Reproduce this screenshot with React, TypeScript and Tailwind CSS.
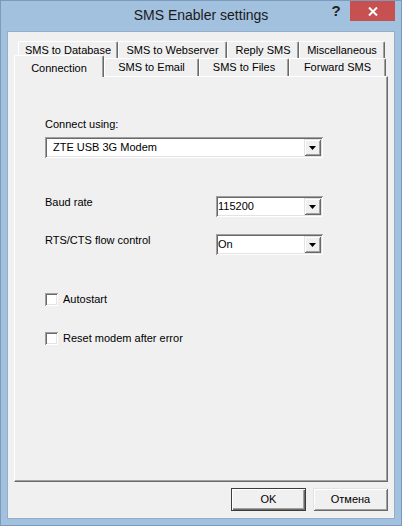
import React from 'react';

const sunken =
  'shadow-[inset_1px_1px_0_#a0a0a0,inset_-1px_-1px_0_#ffffff,inset_2px_2px_0_#696969,inset_-2px_-2px_0_#e3e3e3]';
const raised =
  'shadow-[inset_1px_1px_0_#e3e3e3,inset_-1px_-1px_0_#696969,inset_2px_2px_0_#ffffff,inset_-2px_-2px_0_#a0a0a0]';

function Arrow() {
  return (
    <svg width="7" height="4" viewBox="0 0 7 4">
      <path d="M0 0h7L3.5 4z" fill="#000" />
    </svg>
  );
}

function Combo({ value, width, indent }: { value: string; width: string; indent: string }) {
  return (
    <div className={`${width} h-[21px] bg-white ${sunken} flex items-center p-[2px]`}>
      <span className={`flex-1 ${indent} leading-[13px]`}>{value}</span>
      <div className={`w-[17px] h-[17px] bg-[#f0f0f0] ${raised} flex items-center justify-center`}>
        <Arrow />
      </div>
    </div>
  );
}

function Check({ label }: { label: string }) {
  return (
    <div className="flex items-center h-[13px]">
      <div className="w-[13px] h-[13px] bg-white shadow-[inset_1px_1px_0_#a0a0a0,inset_-1px_-1px_0_#ffffff,inset_2px_2px_0_#696969,inset_-2px_-2px_0_#e3e3e3]" />
      <span className="ml-[5px] leading-[13px]">{label}</span>
    </div>
  );
}

function Tab({ label, width }: { label: string; width: string }) {
  return (
    <div
      className={`${width} h-full flex items-center justify-center rounded-t-[2px] border-l border-t border-white border-r border-r-[#696969] shadow-[inset_-1px_0_0_#a0a0a0] bg-[#f0f0f0]`}
    >
      {label}
    </div>
  );
}

export default function App() {
  return (
    <div
      className="w-[402px] h-[526px] bg-[#a2c1de] border border-[#7b9bbd] flex flex-col text-[11px] text-black"
      style={{ fontFamily: '"Liberation Sans", Arial, sans-serif' }}
    >
      {/* Title bar */}
      <div className="h-[30px] grid grid-cols-[1fr_auto_1fr]">
        <div />
        <div className="h-[30px] flex items-center text-[14px] text-[#1a1a1a] pb-[1px]">SMS Enabler settings</div>
        <div className="flex justify-end items-start pr-[6px]">
          <div className="w-[28px] h-[20px] flex items-center justify-center text-[15px] font-bold text-[#222] pt-[1px]">?</div>
          <div className="w-[45px] h-[20px] bg-[#c75050] flex items-center justify-center">
            <svg width="10" height="9" viewBox="0 0 10 9">
              <path d="M1 0.5l8 8M9 0.5l-8 8" stroke="#fff" strokeWidth="2" />
            </svg>
          </div>
        </div>
      </div>

      {/* Client area */}
      <div className="mx-[6px] h-[488px] bg-[#f0f0f0] border border-[#95adc7] flex flex-col pt-[9px] px-[6px]">
        {/* Back tab row */}
        <div className="h-[17px] flex pl-[4px]">
          <Tab label="SMS to Database" width="w-[100px]" />
          <Tab label="SMS to Webserver" width="w-[109px]" />
          <Tab label="Reply SMS" width="w-[72px]" />
          <Tab label="Miscellaneous" width="w-[86px]" />
        </div>
        {/* Front tab row */}
        <div className="h-[21px] -mt-[3px] flex items-end">
          <div className="relative z-10 w-[90px] h-[22px] -mb-px bg-[#f0f0f0] flex justify-center pt-[4px] rounded-t-[2px] border-l border-t border-white border-r border-r-[#696969] shadow-[inset_-1px_0_0_#a0a0a0]">
            Connection
          </div>
          <div className="h-[18px] flex">
            <Tab label="SMS to Email" width="w-[95px]" />
            <Tab label="SMS to Files" width="w-[90px]" />
            <Tab label="Forward SMS" width="w-[97px]" />
          </div>
        </div>

        {/* Panel */}
        <div className="w-[374px] h-[406px] border border-t-white border-l-white border-r-[#696969] border-b-[#696969] shadow-[inset_-1px_-1px_0_#a0a0a0] flex flex-col pl-[30px] pt-[41px]">
          <div className="leading-[13px]">Connect using:</div>
          <div className="mt-[6px]">
            <Combo value="ZTE USB 3G Modem" width="w-[278px]" indent="pl-[6px]" />
          </div>

          <div className="mt-[38px] flex items-start">
            <div className="w-[171px] leading-[13px] pt-[0px]">Baud rate</div>
            <Combo value="115200" width="w-[107px]" indent="pl-[0px]" />
          </div>

          <div className="mt-[17px] flex items-start">
            <div className="w-[171px] leading-[13px]">RTS/CTS flow control</div>
            <Combo value="On" width="w-[107px]" indent="pl-[0px]" />
          </div>

          <div className="mt-[38px]">
            <Check label="Autostart" />
          </div>
          <div className="mt-[26px]">
            <Check label="Reset modem after error" />
          </div>
        </div>

        {/* Buttons */}
        <div className="mt-[6px] flex justify-end gap-[7px]">
          <div className="w-[75px] h-[23px] border border-[#3c3c3c] bg-[#f0f0f0] shadow-[inset_1px_1px_0_#ffffff,inset_-1px_-1px_0_#696969,inset_-2px_-2px_0_#a0a0a0] flex items-center justify-center">
            OK
          </div>
          <div className={`w-[75px] h-[23px] bg-[#f0f0f0] ${raised} flex items-center justify-center`}>Отмена</div>
        </div>
      </div>
    </div>
  );
}
